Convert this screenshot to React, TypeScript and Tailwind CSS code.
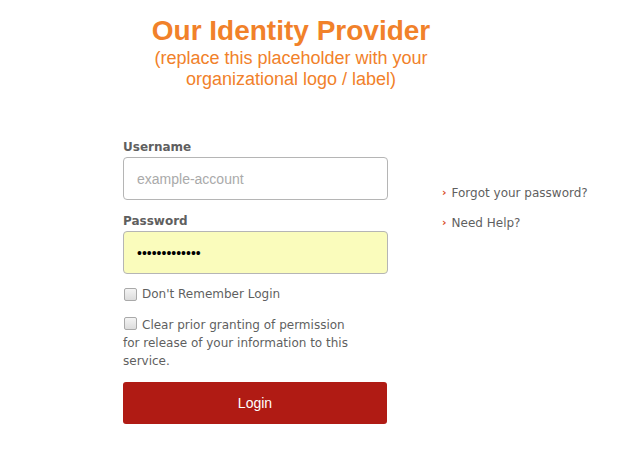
import React from "react";

const box =
  "appearance-none m-0 ml-[1px] w-[13px] h-[13px] shrink-0 rounded-[2px] border border-[#a9a9a9] bg-gradient-to-b from-[#f4f4f4] to-[#dcdcdc]";

export default function App() {
  return (
    <div className="w-[624px] h-[460px] bg-white overflow-hidden font-['DejaVu_Sans',sans-serif] text-[12px] text-[#5f5f5f]">
      {/* header */}
      <div className="w-[582px] pt-[14px] text-center font-['Liberation_Sans',Arial,sans-serif] text-[#f1812a]">
        <h1 className="text-[28px] leading-[34px] font-bold">Our Identity Provider</h1>
        <p className="text-[18px] leading-[21px]">
          (replace this placeholder with your
          <br />
          organizational logo / label)
        </p>
      </div>

      <div className="flex pl-[123px] pt-[49px]">
        <form className="w-[265px] flex flex-col" onSubmit={(e) => e.preventDefault()}>
          <label className="font-bold leading-[16px] mb-[2px]">Username</label>
          <input
            type="text"
            placeholder="example-account"
            className="h-[43px] w-full border border-[#b5b5b5] rounded-[4px] px-[13px] font-['Liberation_Sans',Arial,sans-serif] text-[14px] text-[#333] placeholder:text-[#aaa] outline-none"
          />
          <label className="font-bold leading-[16px] mt-[13px] mb-[2px]">Password</label>
          <input
            type="password"
            readOnly
            value="secretpasswd!"
            className="h-[43px] w-full border border-[#b5b5b5] rounded-[4px] px-[13px] bg-[#fafcbc] font-['Liberation_Sans',Arial,sans-serif] text-[14px] text-black outline-none"
          />
          <label className="flex items-center gap-[5px] mt-[11px] leading-[18px]">
            <input type="checkbox" className={box} />
            <span>Don't Remember Login</span>
          </label>
          <div className="mt-[13px] leading-[18px] w-[230px]">
            <input type="checkbox" className={`${box} mr-[5px] align-[-1px]`} />
            Clear prior granting of permission for release of your information to this service.
          </div>
          <button
            type="submit"
            className="mt-[12px] h-[42px] w-[264px] rounded-[3px] bg-[#b01b14] text-white font-['Liberation_Sans',Arial,sans-serif] text-[14px]"
          >
            Login
          </button>
        </form>

        <ul className="ml-[54px] pt-[46px] flex flex-col gap-[14px] leading-[16px]">
          <li className="flex items-center gap-[5px]">
            <span className="text-[#d94a1e] text-[11px] font-bold">›</span>
            <a href="#" className="text-[#5f5f5f]">Forgot your password?</a>
          </li>
          <li className="flex items-center gap-[5px]">
            <span className="text-[#d94a1e] text-[11px] font-bold">›</span>
            <a href="#" className="text-[#5f5f5f]">Need Help?</a>
          </li>
        </ul>
      </div>
    </div>
  );
}
